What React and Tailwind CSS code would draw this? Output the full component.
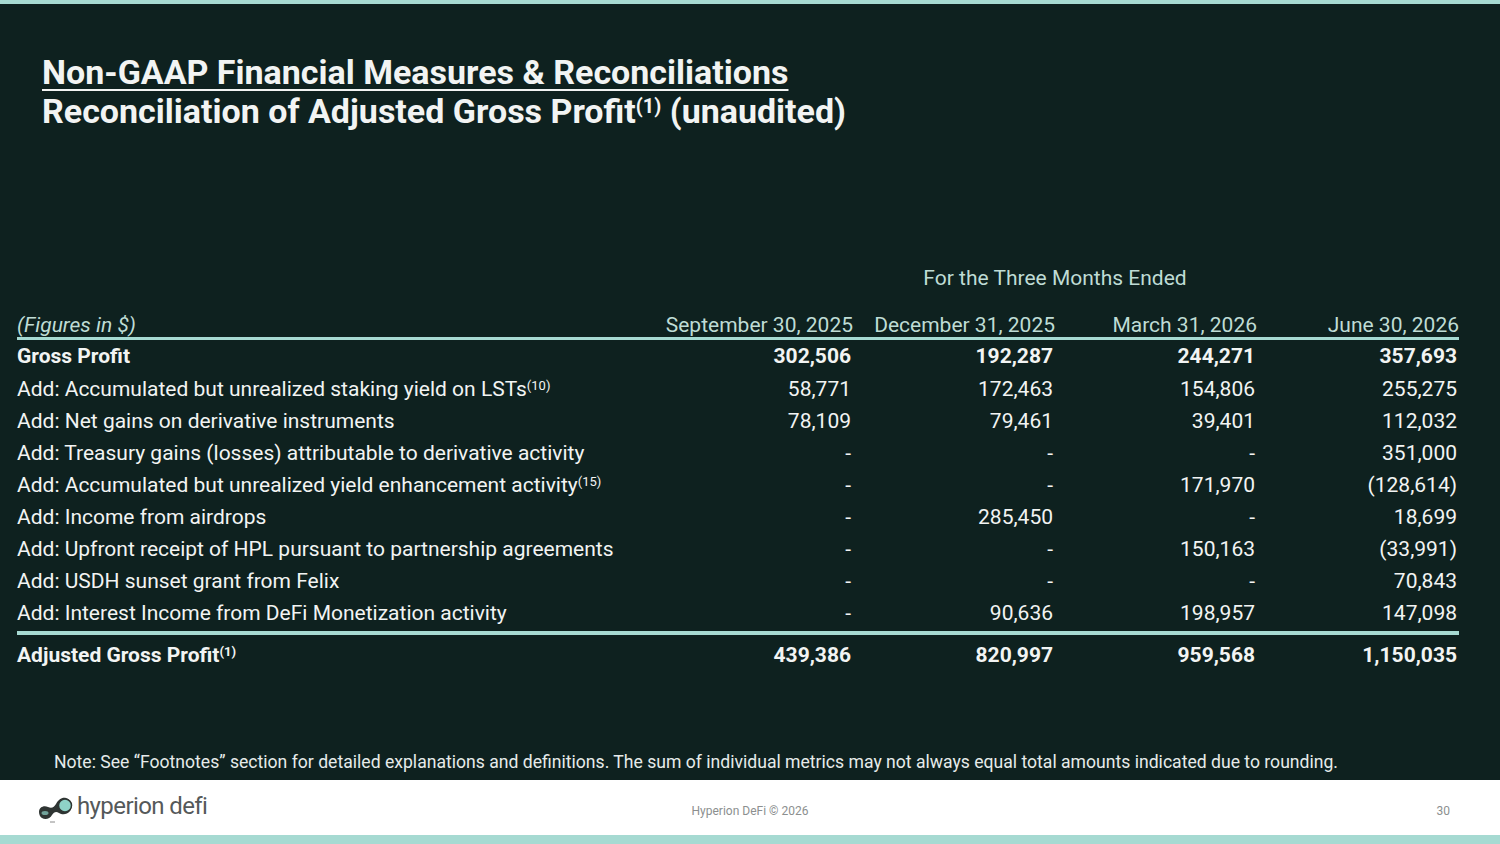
import React from "react";

const rows = [
  { label: "Gross Profit", bold: true, values: ["302,506", "192,287", "244,271", "357,693"] },
  { label: "Add: Accumulated but unrealized staking yield on LSTs", sup: "(10)", values: ["58,771", "172,463", "154,806", "255,275"] },
  { label: "Add: Net gains on derivative instruments", values: ["78,109", "79,461", "39,401", "112,032"] },
  { label: "Add: Treasury gains (losses) attributable to derivative activity", values: ["-", "-", "-", "351,000"] },
  { label: "Add: Accumulated but unrealized yield enhancement activity", sup: "(15)", values: ["-", "-", "171,970", "(128,614)"] },
  { label: "Add: Income from airdrops", values: ["-", "285,450", "-", "18,699"] },
  { label: "Add: Upfront receipt of HPL pursuant to partnership agreements", values: ["-", "-", "150,163", "(33,991)"] },
  { label: "Add: USDH sunset grant from Felix", values: ["-", "-", "-", "70,843"] },
  { label: "Add: Interest Income from DeFi Monetization activity", values: ["-", "90,636", "198,957", "147,098"] },
];

const periods = ["September 30, 2025", "December 31, 2025", "March 31, 2026", "June 30, 2026"];

function Logo() {
  return (
    <svg width="36" height="30" viewBox="0 0 36 30">
      <path
        d="M1 19 C1 14 6 12 10 14 C14 16 16 14 18 11 C20 7 24 4 28 5 C34 7 35 14 32 18 C29 22 24 22 21 20 C18 18 16 19 14 22 C12 26 7 27 4 25 C2 24 1 21 1 19 Z"
        fill="#2f3533"
      />
      <ellipse cx="7" cy="20" rx="3.5" ry="2" fill="#8fd3c8" opacity="0.7" />
      <circle cx="27" cy="12.5" r="6.5" fill="#8fd3c8" stroke="#2f3533" strokeWidth="1.5" />
      <path d="M12 29 L17 29" stroke="#8a8a8a" strokeWidth="1" />
    </svg>
  );
}

export default function App() {
  return (
    <div className="w-[1500px] h-[844px] flex flex-col bg-[#0e211f] overflow-hidden" style={{ fontFamily: "Roboto, 'Liberation Sans', sans-serif" }}>
      <div className="h-[4px] bg-[#a6dad2]" />
      <div className="h-[776px] flex flex-col text-[#f2f4f3]">
        <div className="pl-[42px] pt-[49px] font-bold text-[34px] leading-[39px]">
          <div className="underline decoration-2 underline-offset-[5px]">Non-GAAP Financial Measures &amp; Reconciliations</div>
          <div>
            Reconciliation of Adjusted Gross Profit<sup className="text-[20px]">(1)</sup> (unaudited)
          </div>
        </div>

        <div className="mt-[135px] pl-[17px] pr-[41px]">
          <div className="grid grid-cols-[1fr_808px]">
            <div />
            <div className="text-center text-[21px] leading-6 text-[#bfdcd5]">For the Three Months Ended</div>
          </div>
          <div className="mt-[23px] grid grid-cols-[1fr_202px_202px_202px_202px] border-b-[3px] border-[#a6dad2] text-[21px] leading-[24px] text-[#bfdcd5]">
            <div className="italic">(Figures in $)</div>
            {periods.map((p) => (
              <div key={p} className="text-right">{p}</div>
            ))}
          </div>
          <div className="border-b-4 border-[#a6dad2] pb-[1px]">
            {rows.map((r) => (
              <div key={r.label} className={`grid grid-cols-[1fr_202px_202px_202px_202px] items-center text-[21px] ${r.bold ? "font-bold h-[34px]" : "h-[32px]"}`}>
                <div>
                  {r.label}
                  {r.sup && <sup className="text-[13px]">{r.sup}</sup>}
                </div>
                {r.values.map((v, i) => (
                  <div key={i} className="text-right pr-[2px]">{v}</div>
                ))}
              </div>
            ))}
          </div>
          <div className="grid grid-cols-[1fr_202px_202px_202px_202px] h-[42px] items-center text-[21px] font-bold">
            <div>
              Adjusted Gross Profit<sup className="text-[13px]">(1)</sup>
            </div>
            {["439,386", "820,997", "959,568", "1,150,035"].map((v) => (
              <div key={v} className="text-right pr-[2px]">{v}</div>
            ))}
          </div>
        </div>

        <div className="flex-1" />
        <div className="pl-[54px] pb-[8px] text-[17.6px] leading-5 text-[#e6ebea]">
          Note: See “Footnotes” section for detailed explanations and definitions. The sum of individual metrics may not always equal total amounts indicated due to rounding.
        </div>
      </div>

      <div className="h-[55px] bg-white flex items-center px-[38px]">
        <div className="flex items-center gap-[3px] w-[400px]">
          <Logo />
          <span className="text-[24px] text-[#55595a] tracking-tight leading-none pb-[3px]">hyperion defi</span>
        </div>
        <div className="flex-1 text-center text-[12px] text-[#8c8f8f] pt-[6px]">Hyperion DeFi © 2026</div>
        <div className="w-[400px] text-right text-[12px] text-[#8c8f8f] pt-[6px] pr-[12px]">30</div>
      </div>
      <div className="flex-1 bg-[#a6dad2]" />
    </div>
  );
}
